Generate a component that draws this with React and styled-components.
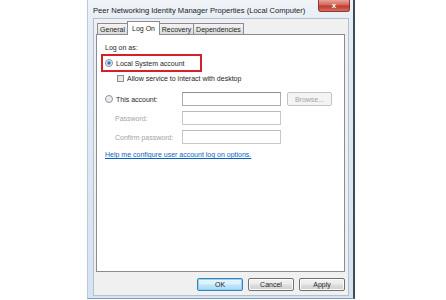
import React from 'react';
import styled, { createGlobalStyle } from 'styled-components';

const GlobalStyle = createGlobalStyle`
  html, body {
    margin: 0;
    padding: 0;
    background: #ffffff;
  }
  body {
    font-family: "Liberation Sans", Arial, sans-serif;
    font-size: 7px;
    color: #1e1e1e;
  }
`;

const Page = styled.div`
  width: 446px;
  height: 300px;
  padding-left: 87px;
  box-sizing: border-box;
  overflow: hidden;
`;

const Window = styled.div`
  width: 268px;
  height: 299px;
  box-sizing: border-box;
  display: flex;
  flex-direction: column;
  background: linear-gradient(180deg, #f1f4f8 0%, #e4ecf5 8%, #d6e3f1 100%);
  border-left: 1px solid #b8c9dc;
  border-right: 2px solid #3f4b58;
  border-bottom: 1px solid #7d9cc0;
  padding: 0 4px 2px 5px;
`;

const TitleBar = styled.div`
  height: 20px;
  display: flex;
  align-items: flex-start;
  justify-content: space-between;
`;

const TitleText = styled.div`
  padding-top: 6px;
  font-size: 7.6px;
  color: #222;
  white-space: nowrap;
`;

const CloseButton = styled.div`
  width: 32px;
  height: 12px;
  margin-right: -1px;
  border: 1px solid #8a3a32;
  border-top: none;
  border-radius: 0 0 3px 3px;
  background: linear-gradient(180deg, #e8a49a 0%, #d1675a 45%, #c0392b 55%, #d56f5f 100%);
  display: flex;
  align-items: center;
  justify-content: center;
  color: #fff;
  font-size: 8px;
  font-weight: bold;
  box-sizing: border-box;
`;

const Body = styled.div`
  flex: 1;
  display: flex;
  flex-direction: column;
  background: #f0f0f0;
  border: 1px solid #b4c0ce;
  padding: 2px 3px 4px 2px;
`;

const TabStrip = styled.div`
  display: flex;
  align-items: flex-end;
  height: 14px;
  padding-left: 1px;
  position: relative;
  z-index: 1;
`;

const Tab = styled.div`
  width: ${(p) => p.$w}px;
  height: ${(p) => (p.$active ? 14 : 12)}px;
  box-sizing: border-box;
  display: flex;
  align-items: center;
  justify-content: center;
  border: 1px solid #898c95;
  border-bottom: ${(p) => (p.$active ? 'none' : '1px solid #898c95')};
  margin-left: ${(p) => (p.$first ? 0 : -1)}px;
  background: ${(p) => (p.$active ? '#ffffff' : 'linear-gradient(180deg, #f3f3f3 0%, #e9e9e9 50%, #dcdcdc 100%)')};
  padding-bottom: ${(p) => (p.$active ? 1 : 0)}px;
  white-space: nowrap;
  color: #1e1e1e;
`;

const Panel = styled.div`
  height: 238px;
  margin-top: -1px;
  box-sizing: border-box;
  background: #ffffff;
  border: 1px solid #898c95;
  padding: 8px 8px 0 8px;
  display: flex;
  flex-direction: column;
`;

const Label = styled.div`
  line-height: 9px;
  color: ${(p) => (p.$disabled ? '#a3a3a3' : '#1e1e1e')};
  white-space: nowrap;
`;

const Highlight = styled.div`
  width: 101px;
  height: 18px;
  box-sizing: border-box;
  margin: 2px 0 0 -4px;
  border: 2px solid #d4202b;
  padding-left: 2px;
  display: flex;
  align-items: center;
`;

const Row = styled.div`
  display: flex;
  align-items: center;
  gap: 3px;
`;

const Radio = styled.span`
  width: 8px;
  height: 8px;
  box-sizing: border-box;
  border-radius: 50%;
  border: 1px solid #8c8f94;
  background: ${(p) =>
    p.$checked
      ? 'radial-gradient(circle, #1a5fc2 0%, #3b86e0 30%, #a9c9ef 45%, #e9eef4 55%)'
      : 'radial-gradient(circle, #e3e5e8 0%, #f2f3f4 70%)'};
  flex: none;
`;

const CheckRow = styled.div`
  display: flex;
  align-items: center;
  gap: 3px;
  margin: 2px 0 0 12px;
`;

const Checkbox = styled.span`
  width: 7px;
  height: 7px;
  box-sizing: border-box;
  border: 1px solid #8e8f8f;
  background: linear-gradient(135deg, #dcdcdc 0%, #f4f4f4 100%);
  flex: none;
`;

const FieldRow = styled.div`
  display: flex;
  align-items: center;
  height: 14px;
  margin-top: ${(p) => p.$mt}px;
`;

const FieldLabel = styled.div`
  width: 77px;
  padding-left: ${(p) => (p.$indent ? 10 : 0)}px;
  box-sizing: border-box;
  display: flex;
  align-items: center;
  gap: 3px;
  color: ${(p) => (p.$disabled ? '#a3a3a3' : '#1e1e1e')};
  white-space: nowrap;
`;

const Input = styled.div`
  width: 99px;
  height: 14px;
  box-sizing: border-box;
  border: 1px solid ${(p) => (p.$disabled ? '#c6c8cc' : '#abadb3')};
  border-top-color: ${(p) => (p.$disabled ? '#b9bbbf' : '#8e9198')};
  background: #ffffff;
`;

const BrowseButton = styled.div`
  width: 45px;
  height: 14px;
  margin-left: 6px;
  box-sizing: border-box;
  border: 1px solid #c3c3c3;
  border-radius: 2px;
  background: #f4f4f4;
  color: #a3a3a3;
  display: flex;
  align-items: center;
  justify-content: center;
`;

const HelpLink = styled.a`
  margin-top: 6px;
  line-height: 9px;
  color: #0a5fc2;
  text-decoration: underline;
  white-space: nowrap;
  cursor: pointer;
`;

const ButtonBar = styled.div`
  display: flex;
  justify-content: flex-end;
  gap: 5px;
  margin-top: 6px;
`;

const Button = styled.div`
  width: 46px;
  height: 13px;
  box-sizing: border-box;
  border: 1px solid ${(p) => (p.$default ? '#3c7fb1' : '#707070')};
  border-radius: 2px;
  background: ${(p) =>
    p.$default
      ? 'linear-gradient(180deg, #eaf6fd 0%, #d9f0fc 45%, #bee6fd 55%, #a7d9f5 100%)'
      : 'linear-gradient(180deg, #f2f2f2 0%, #ebebeb 45%, #dddddd 55%, #cfcfcf 100%)'};
  box-shadow: ${(p) => (p.$default ? 'inset 0 0 0 1px #8fd3f7' : 'inset 0 0 0 1px #fbfbfb')};
  display: flex;
  align-items: center;
  justify-content: center;
  color: #1e1e1e;
`;

const tabs = [
  { name: 'General', w: 31 },
  { name: 'Log On', w: 33, active: true },
  { name: 'Recovery', w: 35 },
  { name: 'Dependencies', w: 51 },
];

export default function App() {
  return (
    <Page>
      <GlobalStyle />
      <Window>
        <TitleBar>
          <TitleText>Peer Networking Identity Manager Properties (Local Computer)</TitleText>
          <CloseButton>x</CloseButton>
        </TitleBar>
        <Body>
          <TabStrip>
            {tabs.map((t, i) => (
              <Tab key={t.name} $w={t.w} $active={t.active} $first={i === 0}>
                {t.name}
              </Tab>
            ))}
          </TabStrip>
          <Panel>
            <Label>Log on as:</Label>
            <Highlight>
              <Row>
                <Radio $checked />
                <Label>Local System account</Label>
              </Row>
            </Highlight>
            <CheckRow>
              <Checkbox />
              <Label>Allow service to interact with desktop</Label>
            </CheckRow>
            <FieldRow $mt={9}>
              <FieldLabel>
                <Radio />
                This account:
              </FieldLabel>
              <Input />
              <BrowseButton>Browse...</BrowseButton>
            </FieldRow>
            <FieldRow $mt={5}>
              <FieldLabel $indent $disabled>Password:</FieldLabel>
              <Input $disabled />
            </FieldRow>
            <FieldRow $mt={5}>
              <FieldLabel $indent $disabled>Confirm password:</FieldLabel>
              <Input $disabled />
            </FieldRow>
            <HelpLink>Help me configure user account log on options.</HelpLink>
          </Panel>
          <ButtonBar>
            <Button $default>OK</Button>
            <Button>Cancel</Button>
            <Button>Apply</Button>
          </ButtonBar>
        </Body>
      </Window>
    </Page>
  );
}
